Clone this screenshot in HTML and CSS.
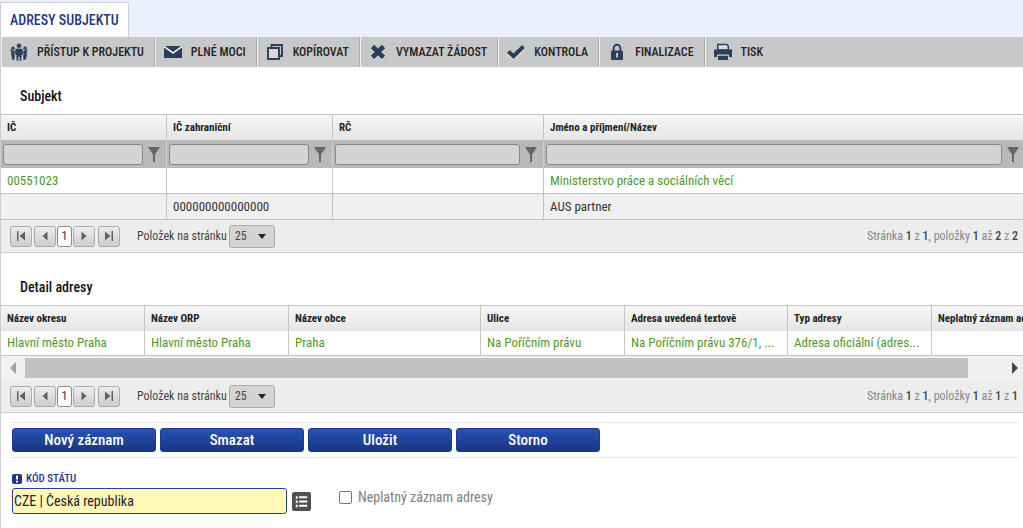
FILE: index.html
```html
<!DOCTYPE html>
<html lang="cs">
<head>
<meta charset="utf-8">
<meta name="viewport" content="width=device-width, initial-scale=1">
<title>Adresy subjektu</title>
<link rel="stylesheet" href="styles.css">
</head>
<body>
<svg class="defs" width="0" height="0" aria-hidden="true">
  <symbol id="i-funnel" viewBox="0 0 12 15"><path fill="#666" d="M0 0h12L7 7.500V15H5V7.500z"/></symbol>
  <symbol id="i-first" viewBox="0 0 10 10"><path fill="#606060" d="M1 0h1.500v10H1zM9 .500v9L3.500 5z"/></symbol>
  <symbol id="i-prev" viewBox="0 0 10 10"><path fill="#606060" d="M7.500 .500v9L2.500 5z"/></symbol>
  <symbol id="i-next" viewBox="0 0 10 10"><path fill="#606060" d="M2.500 .500v9L7.500 5z"/></symbol>
  <symbol id="i-last" viewBox="0 0 10 10"><path fill="#606060" d="M7.500 0H9v10H7.500zM1 .500v9L6.500 5z"/></symbol>
</svg>
<header class="tabs">
  <a class="tab" href="#adresy">Adresy subjektu</a>
</header>
<main class="page" id="adresy">
  <nav class="toolbar" aria-label="Akce">
    <button type="button" class="tool">
      <svg class="tool-icon" viewBox="0 0 18 18"><g fill="#2b3f58" stroke="#dfe3ea" stroke-width=".4"><circle cx="3" cy="5.300" r="2"/><circle cx="15" cy="5.300" r="2"/><path d="M0 5.500l1 4v3l1 4.500h2.800l.500-9zM18 5.500l-1 4v3l-1 4.500h-2.800l-.500-9z"/><circle cx="9" cy="2.800" r="2.500"/><path d="M5 6.500Q5.300 5.300 9 5.300t4 1.200l.300 5-1.400.400-.300 6H9.400v-4h-.800v4h-2.200l-.300-6-1.400-.400z"/></g></svg>
      <span>Přístup k projektu</span></button>
    <button type="button" class="tool">
      <svg class="tool-icon" viewBox="0 0 18 18"><path fill="#2b3f58" d="M0 3h18v12H0z"/><path fill="none" stroke="#eef0f3" stroke-width="1.600" d="M0 3.500l9 6.500 9-6.500"/></svg>
      <span>Plné moci</span></button>
    <button type="button" class="tool">
      <svg class="tool-icon" viewBox="0 0 18 18"><path fill="none" stroke="#2b3f58" stroke-width="1.900" d="M5.500 5V2h10.500V13H13"/><path fill="#d6d8dc" stroke="#2b3f58" stroke-width="1.900" d="M2 5h11v11H2z"/></svg>
      <span>Kopírovat</span></button>
    <button type="button" class="tool">
      <svg class="tool-icon" viewBox="0 0 18 18"><path stroke="#e4e7ec" stroke-width="5" d="M3.500 4.500l11 11M14.500 4.500l-11 11"/><path stroke="#2b3f58" stroke-width="4.600" d="M3.500 3.500l11 11M14.500 3.500l-11 11"/></svg>
      <span>Vymazat žádost</span></button>
    <button type="button" class="tool">
      <svg class="tool-icon" viewBox="0 0 18 18"><path fill="none" stroke="#e8eaee" stroke-width="4" d="M1.500 10l5 4.500L17 4.500"/><path fill="none" stroke="#2b3f58" stroke-width="4" d="M1.300 8.500l5.200 4.700L16.500 3.500"/></svg>
      <span>Kontrola</span></button>
    <button type="button" class="tool">
      <svg class="tool-icon" viewBox="0 0 18 18"><path fill="none" stroke="#2b3f58" stroke-width="2" d="M5.600 8V5.500a3.400 3.700 0 0 1 6.800 0V8"/><rect x="3" y="7.500" width="12" height="9.500" rx="1" fill="#2b3f58"/><path fill="#dfe2e7" d="M8.200 10h1.600v4.500H8.200z"/></svg>
      <span>Finalizace</span></button>
    <button type="button" class="tool">
      <svg class="tool-icon" viewBox="0 0 18 18"><path fill="#d9dce2" stroke="#2b3f58" stroke-width="1.500" d="M3.800 7V1.500h9l1.500 1.500v4z"/><path fill="#2b3f58" d="M0 6.500h18V14h-3v-2.500H3V14H0z"/><path fill="#2b3f58" d="M4 12.800h10V17H4z"/></svg>
      <span>Tisk</span></button>
  </nav>

  <section>
    <h2 class="title">Subjekt</h2>
    <table class="grid subjects">
      <colgroup><col class="w166"><col class="w166"><col class="w211"><col></colgroup>
      <thead>
        <tr><th scope="col">IČ</th><th scope="col">IČ zahraniční</th><th scope="col">RČ</th><th scope="col">Jméno a příjmení/Název</th></tr>
        <tr class="filters">
          <td><div class="filter"><input type="text" aria-label="Filtr IČ"><button type="button" aria-label="Filtrovat"><svg viewBox="0 0 12 15"><use href="#i-funnel"/></svg></button></div></td>
          <td><div class="filter"><input type="text" aria-label="Filtr IČ zahraniční"><button type="button" aria-label="Filtrovat"><svg viewBox="0 0 12 15"><use href="#i-funnel"/></svg></button></div></td>
          <td><div class="filter"><input type="text" aria-label="Filtr RČ"><button type="button" aria-label="Filtrovat"><svg viewBox="0 0 12 15"><use href="#i-funnel"/></svg></button></div></td>
          <td><div class="filter"><input type="text" aria-label="Filtr Jméno"><button type="button" aria-label="Filtrovat"><svg viewBox="0 0 12 15"><use href="#i-funnel"/></svg></button></div></td>
        </tr>
      </thead>
      <tbody>
        <tr class="active"><td>00551023</td><td></td><td></td><td>Ministerstvo práce a sociálních věcí</td></tr>
        <tr class="alt"><td></td><td>000000000000000</td><td></td><td>AUS partner</td></tr>
      </tbody>
    </table>
    <div class="pager">
      <div class="pages">
        <button type="button" class="pg" aria-label="První"><svg viewBox="0 0 10 10"><use href="#i-first"/></svg></button>
        <button type="button" class="pg" aria-label="Předchozí"><svg viewBox="0 0 10 10"><use href="#i-prev"/></svg></button>
        <button type="button" class="pg current">1</button>
        <button type="button" class="pg" aria-label="Další"><svg viewBox="0 0 10 10"><use href="#i-next"/></svg></button>
        <button type="button" class="pg" aria-label="Poslední"><svg viewBox="0 0 10 10"><use href="#i-last"/></svg></button>
      </div>
      <label for="size1">Položek na stránku</label>
      <span class="select"><select id="size1"><option>25</option></select></span>
      <p class="info">Stránka <b>1</b> z <b>1</b>, položky <b>1</b> až <b>2</b> z <b>2</b></p>
    </div>
  </section>

  <section>
    <h2 class="title">Detail adresy</h2>
    <div class="scroller">
      <table class="grid addresses">
        <colgroup><col class="w144"><col class="w144"><col class="w192"><col class="w144"><col class="w163"><col class="w144"><col class="w144"></colgroup>
        <thead>
          <tr><th scope="col">Název okresu</th><th scope="col">Název ORP</th><th scope="col">Název obce</th><th scope="col">Ulice</th><th scope="col">Adresa uvedená textově</th><th scope="col">Typ adresy</th><th scope="col">Neplatný záznam adresy</th></tr>
        </thead>
        <tbody>
          <tr class="active"><td>Hlavní město Praha</td><td>Hlavní město Praha</td><td>Praha</td><td>Na Poříčním právu</td><td>Na Poříčním právu 376/1, ...</td><td>Adresa oficiální (adres...</td><td></td></tr>
        </tbody>
      </table>
    </div>
    <div class="hscroll">
      <button type="button" class="arrow" aria-label="Posunout vlevo"><svg viewBox="0 0 6 12"><path fill="#a3a3a3" d="M6 0v12L0 6z"/></svg></button>
      <div class="track"><div class="thumb"></div></div>
      <button type="button" class="arrow" aria-label="Posunout vpravo"><svg viewBox="0 0 6 12"><path fill="#444" d="M0 0v12l6-6z"/></svg></button>
    </div>
    <div class="pager">
      <div class="pages">
        <button type="button" class="pg" aria-label="První"><svg viewBox="0 0 10 10"><use href="#i-first"/></svg></button>
        <button type="button" class="pg" aria-label="Předchozí"><svg viewBox="0 0 10 10"><use href="#i-prev"/></svg></button>
        <button type="button" class="pg current">1</button>
        <button type="button" class="pg" aria-label="Další"><svg viewBox="0 0 10 10"><use href="#i-next"/></svg></button>
        <button type="button" class="pg" aria-label="Poslední"><svg viewBox="0 0 10 10"><use href="#i-last"/></svg></button>
      </div>
      <label for="size2">Položek na stránku</label>
      <span class="select"><select id="size2"><option>25</option></select></span>
      <p class="info">Stránka <b>1</b> z <b>1</b>, položky <b>1</b> až <b>1</b> z <b>1</b></p>
    </div>
  </section>

  <form class="form">
    <div class="actions">
      <button type="button">Nový záznam</button>
      <button type="button">Smazat</button>
      <button type="button">Uložit</button>
      <button type="button">Storno</button>
    </div>
    <div class="fields">
      <div class="field">
        <label class="required" for="country"><svg viewBox="0 0 10 10"><rect width="10" height="10" rx="2" fill="#1d3584"/><path fill="#fff" d="M4 1.500h2v4H4zM4 6.700h2v1.800H4z"/></svg>Kód státu</label>
        <div class="combo">
          <input id="country" type="text" value="CZE | Česká republika">
          <button type="button" aria-label="Vybrat ze seznamu"><svg viewBox="0 0 20 20"><path fill="#fff" d="M4 4.500h2v2.500H4zM4 9h2v2.500H4zM4 13.500h2V16H4zM7.500 4.500H16v2H7.500zM7.500 9H16v2H7.500zM7.500 13.500H16v2H7.500z"/></svg></button>
        </div>
      </div>
      <label class="check"><input type="checkbox"><span>Neplatný záznam adresy</span></label>
    </div>
  </form>
</main>
</body>
</html>
```
FILE: styles.css
```css
* { box-sizing: border-box; }

body {
  margin: 0;
  background: #fff;
  color: #333;
  font: 13px/16px "Roboto Condensed", "Liberation Sans Narrow", Roboto, sans-serif;
}

button, input, select { font: inherit; color: inherit; margin: 0; padding: 0; }
button { border: 0; background: none; }
svg { display: block; }
.defs { position: absolute; }

.tabs { display: flex; padding-top: 2px; background: #ebeffc; }

.tab {
  height: 35px;
  padding: 0 9px;
  border: 1px solid #ccc;
  border-bottom: 0;
  border-radius: 2px 2px 0 0;
  background: #fff;
  color: #22387f;
  font-size: 14px;
  font-weight: 500;
  line-height: 34px;
  text-decoration: none;
  text-transform: uppercase;
}

.page { min-height: calc(100vh - 37px); border-left: 1px solid #ccc; }

.toolbar { display: flex; height: 30px; background: #c8c8c8; overflow: hidden; }

.tool {
  display: flex;
  flex: none;
  align-items: center;
  gap: 9px;
  padding: 0 10px 0 8px;
  border-left: 1px solid #f2f2f2;
  border-right: 1px solid #aaa;
  color: #222;
  font-size: 12px;
  font-weight: 500;
  text-transform: uppercase;
  white-space: nowrap;
}
.tool:last-child { border-right: 0; }
.tool-icon { width: 18px; height: 18px; }

.title {
  margin: 0;
  padding: 20px 19px 9px;
  color: #111;
  font-size: 14px;
  font-weight: 500;
  line-height: 18px;
}

.grid {
  width: 100%;
  border-top: 1px solid #c4c4c4;
  border-spacing: 0;
  table-layout: fixed;
}
.grid th, .grid td {
  overflow: hidden;
  padding: 0 6px;
  border-right: 1px solid #c4c4c4;
  text-align: left;
  white-space: nowrap;
}
.subjects th:last-child, .subjects td:last-child { border-right: 0; }
.grid th {
  height: 25px;
  background: linear-gradient(#f6f6f6, #e6e6e6);
  color: #222;
  font-size: 11px;
  font-weight: 700;
}
.grid tbody td { height: 26px; border-bottom: 1px solid #c4c4c4; }
.grid .active { color: #4f9a1f; }
.grid .alt { background: #f0f0f0; }
.w144 { width: 144px; }
.w163 { width: 163px; }
.w166 { width: 166px; }
.w192 { width: 192px; }
.w211 { width: 211px; }

.filters { background: #b9b9b9; }
.grid .filters td { height: 28px; padding: 0 2px; border-color: #d0d0d0; }
.grid .filters td:last-child { padding-right: 0; }
.filter { display: flex; align-items: center; }
.filter input {
  flex: 1;
  min-width: 0;
  height: 21px;
  border: 1px solid #888;
  border-radius: 3px;
  background: #d4d4d4;
}
.filter button { width: 21px; padding-left: 5px; }
.filter svg { width: 12px; height: 15px; }

.pager {
  display: flex;
  align-items: center;
  height: 33px;
  padding: 0 5px 0 9px;
  border-bottom: 1px solid #ccc;
  background: #ededed;
  color: #444;
  font-size: 12px;
}
.pages { display: flex; align-items: center; margin-right: 17px; }
.pg {
  display: grid;
  place-items: center;
  width: 22px;
  height: 21px;
  border: 1px solid #aaa;
  border-radius: 3px;
  background: linear-gradient(#ececec, #cdcdcd);
}
.pg:first-child { margin-right: 2px; }
.pg:last-child { margin-left: 3px; }
.pg svg { width: 10px; height: 10px; }
.pg.current { width: 15px; margin: 0 1px; border-color: #888; background: #fff; color: #333; }

.select { position: relative; margin-left: 2px; }
.select select {
  display: block;
  width: 46px;
  height: 23px;
  padding-left: 5px;
  border: 1px solid #aaa;
  border-radius: 3px;
  background: #d4d4d4;
  appearance: none;
}
.select::after {
  position: absolute;
  top: 9px;
  right: 9px;
  border: 4px solid transparent;
  border-top: 5px solid #222;
  border-bottom: 0;
  content: "";
  pointer-events: none;
}
.info { margin: 0 0 0 auto; color: #888; }
.info b { color: #444; font-weight: 500; }

section + section .title { padding-top: 25px; }
.scroller { overflow: hidden; }
.addresses { width: 1075px; }
.addresses tbody td { height: 25px; }

.hscroll { display: flex; align-items: center; height: 24px; background: #f0f0f0; }
.arrow { display: grid; flex: none; place-items: center; width: 24px; height: 20px; }
.arrow:last-child { width: 16px; }
.arrow svg { width: 6px; height: 12px; }
.track { flex: 1; }
.thumb { width: 96%; height: 20px; background: #c1c1c1; }

.form { padding: 9px 4px 0 11px; }
.actions {
  display: flex;
  gap: 4px;
  padding: 5px 0;
  border-top: 1px solid #e4e4e4;
  border-bottom: 1px solid #e4e4e4;
}
.actions button {
  width: 144px;
  height: 24px;
  border: 1px solid #1b3a8c;
  border-radius: 3px;
  background: linear-gradient(#2a52b5, #173682);
  color: #fff;
  font-size: 15px;
  font-weight: 500;
}

.fields { display: flex; align-items: flex-start; padding-top: 14px; }
.field { display: grid; gap: 2px; }
.required {
  display: flex;
  align-items: center;
  gap: 4px;
  color: #22387f;
  font-size: 11px;
  font-weight: 500;
  line-height: 14px;
  text-transform: uppercase;
}
.required svg { width: 10px; height: 10px; }
.combo { display: flex; align-items: center; gap: 5px; }
.combo input {
  width: 275px;
  height: 26px;
  padding: 0 1px;
  border: 1px solid #2b3f8f;
  border-radius: 3px;
  background: #fff9b8;
  color: #222;
  font-size: 14px;
}
.combo button { width: 19px; height: 19px; border-radius: 2px; background: #505050; }
.check {
  display: flex;
  align-items: center;
  gap: 6px;
  margin: 17px 0 0 28px;
  color: #808080;
  font-size: 14px;
}
.check input {
  width: 13px;
  height: 13px;
  border: 1px solid #777;
  border-radius: 2px;
  background: #fff;
  appearance: none;
}
.check input:checked { background: #22387f; }
```
